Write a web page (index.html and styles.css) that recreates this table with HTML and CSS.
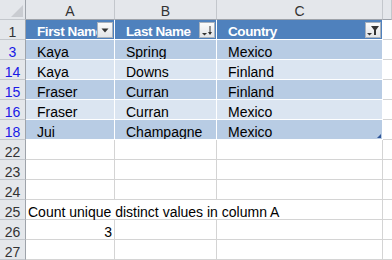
FILE: index.html
```html
<!DOCTYPE html>
<html lang="en">
<head>
    <meta charset="UTF-8">
    <title>Count unique distinct values</title>
    <link rel="stylesheet" href="styles.css">
</head>
<body>
    <div class="sheet">
        <div class="row head-row">
            <div class="rh corner"><span class="corner-mark"></span></div>
            <div class="ch">A</div>
            <div class="ch">B</div>
            <div class="ch">C</div>
            <div class="ch"></div>
        </div>
        <div class="row">
            <div class="rh">1</div>
            <div class="cell th">First Name
                <span class="filter-btn">
                    <svg width="14" height="14" viewBox="0 0 14 14"><path d="M3.5 5.5h7l-3.5 4z" fill="#333"/></svg>
                </span>
            </div>
            <div class="cell th">Last Name
                <span class="filter-btn">
                    <svg width="14" height="14" viewBox="0 0 14 14"><path d="M2 10h5l-2.5 2.5z" fill="#333"/><path d="M10 3v8" stroke="#333" stroke-width="1"/><path d="M8 9h4l-2 3z" fill="#333"/></svg>
                </span>
            </div>
            <div class="cell th">Country
                <span class="filter-btn">
                    <svg width="14" height="14" viewBox="0 0 14 14"><path d="M1 10h5l-2.5 2.5z" fill="#333"/><path d="M5 3h8l-3 4v5h-2v-5z" fill="#333"/></svg>
                </span>
            </div>
            <div class="cell"></div>
        </div>
        <div class="row band-dark">
            <div class="rh filtered">3</div>
            <div class="cell">Kaya</div>
            <div class="cell">Spring</div>
            <div class="cell">Mexico</div>
            <div class="cell"></div>
        </div>
        <div class="row band-light">
            <div class="rh filtered">14</div>
            <div class="cell">Kaya</div>
            <div class="cell">Downs</div>
            <div class="cell">Finland</div>
            <div class="cell"></div>
        </div>
        <div class="row band-dark">
            <div class="rh filtered">15</div>
            <div class="cell">Fraser</div>
            <div class="cell">Curran</div>
            <div class="cell">Finland</div>
            <div class="cell"></div>
        </div>
        <div class="row band-light">
            <div class="rh filtered">16</div>
            <div class="cell">Fraser</div>
            <div class="cell">Curran</div>
            <div class="cell">Mexico</div>
            <div class="cell"></div>
        </div>
        <div class="row band-dark">
            <div class="rh filtered">18</div>
            <div class="cell">Jui</div>
            <div class="cell">Champagne</div>
            <div class="cell last">Mexico<span class="resize-mark"></span></div>
            <div class="cell"></div>
        </div>
        <div class="row">
            <div class="rh">22</div>
            <div class="cell"></div>
            <div class="cell"></div>
            <div class="cell"></div>
            <div class="cell"></div>
        </div>
        <div class="row">
            <div class="rh">23</div>
            <div class="cell"></div>
            <div class="cell"></div>
            <div class="cell"></div>
            <div class="cell"></div>
        </div>
        <div class="row">
            <div class="rh">24</div>
            <div class="cell"></div>
            <div class="cell"></div>
            <div class="cell"></div>
            <div class="cell"></div>
        </div>
        <div class="row">
            <div class="rh">25</div>
            <div class="cell span3 plain">Count unique distinct values in column A</div>
            <div class="cell"></div>
        </div>
        <div class="row">
            <div class="rh">26</div>
            <div class="cell plain num">3</div>
            <div class="cell"></div>
            <div class="cell"></div>
            <div class="cell"></div>
        </div>
        <div class="row">
            <div class="rh">27</div>
            <div class="cell"></div>
            <div class="cell"></div>
            <div class="cell"></div>
            <div class="cell"></div>
        </div>
    </div>
</body>
</html>
```

FILE: styles.css
```css
body {
    margin: 0;
    padding: 0;
    background: #fff;
    font-family: 'Liberation Sans', Arial, sans-serif;
    font-size: 14px;
    color: #000;
    overflow: hidden;
}
.sheet {
    width: 392px;
}
.row {
    display: grid;
    grid-template-columns: 26px 89px 102px 166px 1fr;
    height: 20px;
}
.rh, .ch, .cell {
    box-sizing: border-box;
    height: 20px;
    border-right: 1px solid #d4d4d4;
    border-bottom: 1px solid #d4d4d4;
    white-space: nowrap;
    line-height: 14px;
}
.rh {
    background: #e4e7eb;
    border-right-color: #9ea3aa;
    border-bottom-color: #c3c7cc;
    text-align: center;
    color: #333;
    padding-top: 5px;
}
.rh.filtered {
    color: #1a1ae6;
}
.corner {
    position: relative;
}
.corner-mark {
    position: absolute;
    right: 2px;
    bottom: 2px;
    width: 0;
    height: 0;
    border-left: 12px solid transparent;
    border-bottom: 12px solid #c9ccd1;
}
.ch {
    background: #e4e7eb;
    border-right-color: #c3c7cc;
    border-bottom-color: #9ea3aa;
    text-align: center;
    color: #333;
    padding-top: 4px;
}
.cell {
    padding: 5px 2px 0 11px;
    overflow: hidden;
    position: relative;
}
.cell.th {
    background: #4f81bd;
    color: #fff;
    font-weight: bold;
    font-size: 13.5px;
    letter-spacing: -0.4px;
    border-color: #fff;
}
.band-dark .cell {
    background: #b8cce4;
    border-color: #fff;
}
.band-light .cell {
    background: #dbe5f1;
    border-color: #fff;
}
.band-dark .cell:last-child,
.band-light .cell:last-child {
    background: #fff;
    border-color: #d4d4d4;
}
.cell.span3 {
    grid-column: span 3;
    overflow: visible;
}
.cell.plain {
    padding-left: 2px;
}
.cell.num {
    text-align: right;
}
.filter-btn {
    position: absolute;
    right: 1px;
    top: 2px;
    width: 16px;
    height: 16px;
    box-sizing: border-box;
    border: 1px solid #a9b2bd;
    background: linear-gradient(#fbfbfb, #e2e4e7);
    display: flex;
    align-items: center;
    justify-content: center;
}
.resize-mark {
    position: absolute;
    right: 1px;
    bottom: 1px;
    width: 0;
    height: 0;
    border-left: 4px solid transparent;
    border-bottom: 4px solid #2f5597;
}
```
